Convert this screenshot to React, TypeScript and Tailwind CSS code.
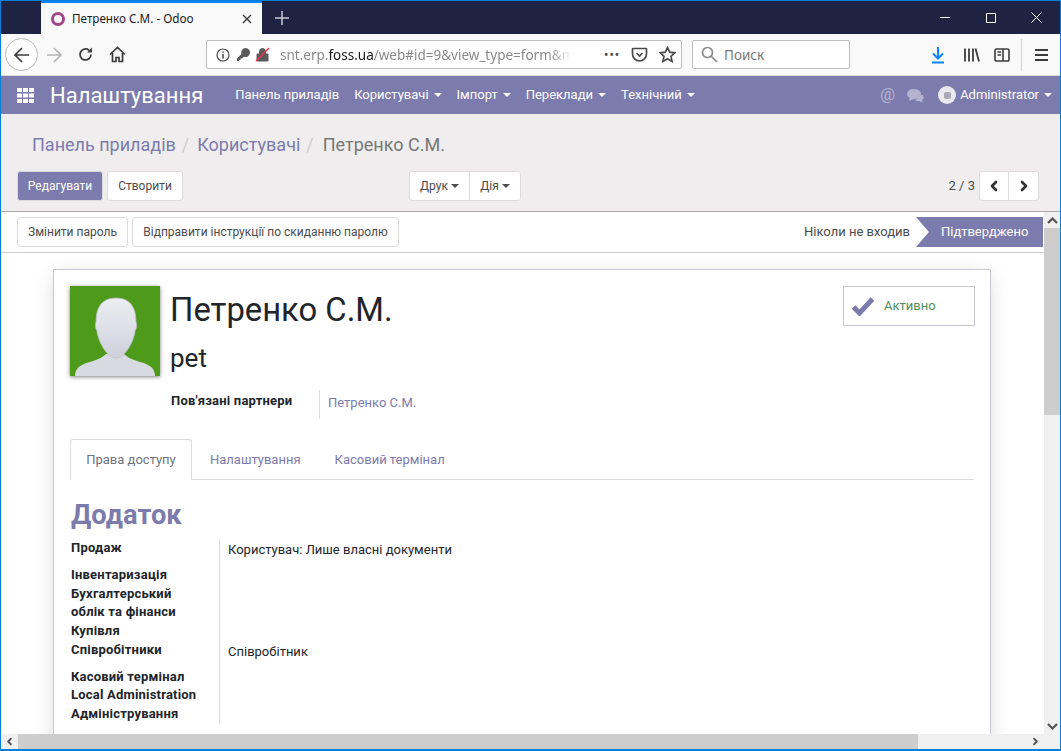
import { ChevronLeft, ChevronRight } from "lucide-react";
import type { ReactNode } from "react";

const navItems = ["Користувачі", "Імпорт", "Переклади", "Технічний"];

const groups = [
  { label: "Продаж", value: "Користувач: Лише власні документи", gap: "mb-[8px]" },
  { label: "Інвентаризація", value: "", gap: "" },
  { label: "Бухгалтерський облік та фінанси", value: "", gap: "" },
  { label: "Купівля", value: "", gap: "" },
  { label: "Співробітники", value: "Співробітник", gap: "mb-[8px]" },
  { label: "Касовий термінал", value: "", gap: "" },
  { label: "Local Administration", value: "", gap: "" },
  { label: "Адміністрування", value: "", gap: "" }
];

function Caret({ className = "ml-[5px] border-t-white" }: { className?: string }): ReactNode {
  return <span className={`inline-block h-0 w-0 border-x-[4px] border-t-[4px] border-x-transparent align-middle ${className}`} />;
}

function Btn({ children, className = "" }: { children: ReactNode; className?: string }): ReactNode {
  return (
    <button type="button" className={`flex h-[30px] items-center justify-center rounded-[3px] border border-[#dcdcdc] bg-white px-[10px] text-[12px] text-[#4c4c4c] ${className}`}>
      {children}
    </button>
  );
}

function BrowserChrome(): ReactNode {
  return (
    <>
      <div className="flex h-[33px] bg-[#1e2344]">
        <div className="w-[40px]" />
        <div className="flex h-[33px] w-[221px] items-center border-t-2 border-[#0a84ff] bg-[#f9f9fa] pl-[9px] pr-[9px]">
          <svg width="16" height="16" viewBox="0 0 16 16">
            <circle cx="8" cy="8" r="5.5" fill="none" stroke="#a24689" strokeWidth="3" />
          </svg>
          <span className="ml-[6px] flex-1 text-[11.7px] text-[#18181a]" style={{ fontFamily: "'Noto Sans', sans-serif" }}>Петренко С.М. - Odoo</span>
          <svg width="12" height="12" viewBox="0 0 12 12" stroke="#3a3a3a" strokeWidth="1.4">
            <path d="M2 2l8 8M10 2l-8 8" />
          </svg>
        </div>
        <div className="flex w-[40px] items-center justify-center">
          <svg width="14" height="14" viewBox="0 0 14 14" stroke="#c8c9d2" strokeWidth="1.5">
            <path d="M7 0v14M0 7h14" />
          </svg>
        </div>
        <div className="flex-1" />
        <div className="flex items-center">
          <svg className="mr-[35px]" width="11" height="11" viewBox="0 0 11 11" stroke="#fff">
            <path d="M1 5.5h10" />
          </svg>
          <svg className="mr-[35px]" width="11" height="11" viewBox="0 0 11 11" stroke="#fff" fill="none">
            <path d="M1.5 1.5h9v9h-9z" />
          </svg>
          <svg className="mr-[18px]" width="11" height="11" viewBox="0 0 11 11" stroke="#fff">
            <path d="M.5.5l10 10M10.5.5l-10 10" />
          </svg>
        </div>
      </div>
      <div className="flex h-[42px] items-center border-b border-[#dcdcdc] bg-[#f9f9fa]">
        <div className="ml-[4px] flex h-[33px] w-[33px] items-center justify-center rounded-full border border-[#b8b8b8] bg-white">
          <svg width="18" height="18" viewBox="0 0 18 18" fill="none" stroke="#3c3c3c" strokeWidth="1.7">
            <path d="M16 9H2M9 2L2 9l7 7" />
          </svg>
        </div>
        <svg className="ml-[7px]" width="18" height="18" viewBox="0 0 18 18" fill="none" stroke="#b4b4b4" strokeWidth="1.7">
          <path d="M2 9h14M9 2l7 7-7 7" />
        </svg>
        <svg className="ml-[14px]" width="17" height="17" viewBox="0 0 17 17" fill="none" stroke="#3c3c3c" strokeWidth="1.8">
          <path d="M14 8.5A5.5 5.5 0 1 1 12 4.2" />
          <path d="M15 1.5v5h-5" fill="#3c3c3c" stroke="none" />
        </svg>
        <svg className="ml-[15px]" width="17" height="17" viewBox="0 0 17 17" fill="none" stroke="#3c3c3c" strokeWidth="1.7">
          <path d="M1 8.5l7.5-7 7.5 7M3.5 7v8.500h3.500v-4h3v4h3.500V7" />
        </svg>
        <div className="ml-[80px] flex h-[29px] w-[476px] items-center rounded-[2px] border border-[#bebebe] bg-white pl-[9px]">
          <svg width="14" height="14" viewBox="0 0 14 14" fill="none" stroke="#4a4a4a" strokeWidth="1.200">
            <circle cx="7" cy="7" r="6" />
            <path d="M7 6v4.500M7 3.500v1.300" strokeWidth="1.600" />
          </svg>
          <svg className="ml-[6px]" width="15" height="15" viewBox="0 0 15 15" fill="#5a5a5a">
            <path d="M9.500 1a4.500 4.500 0 1 1-1.600 8.700L6 11.500H4.500V13H3v1H1v-2.500L5.400 7A4.500 4.500 0 0 1 9.500 1z" />
          </svg>
          <svg className="ml-[4px]" width="15" height="15" viewBox="0 0 15 15">
            <path d="M2 7h11v7H2zM4.500 7V4.500a3 3 0 0 1 6 0V7" fill="#5a5a5a" stroke="#5a5a5a" />
            <path d="M1 14L14 1" stroke="#f0304a" strokeWidth="1.500" />
          </svg>
          <div className="ml-[10px] w-[292px] whitespace-nowrap pt-px text-[13.500px] text-[#8a8a8a] [mask-image:linear-gradient(to_right,black_92%,transparent)]" style={{ fontFamily: "'Noto Sans', sans-serif" }}>
            snt.erp.<span className="text-[#18181a]">foss.ua</span>/web#id=9&amp;view_type=form&amp;m
          </div>
          <div className="flex-1" />
          <span className="mr-[11px] text-[12px] font-bold tracking-[1px] text-[#4a4a4a]">•••</span>
          <svg className="mr-[11px]" width="17" height="17" viewBox="0 0 17 17" fill="none" stroke="#4a4a4a" strokeWidth="1.700">
            <path d="M2 2.500h13a.5.5 0 0 1 .5.5v5a7 7 0 0 1-14 0V3a.5.5 0 0 1 .5-.5zM5.500 7l3 3 3-3" />
          </svg>
          <svg className="mr-[5px]" width="17" height="17" viewBox="0 0 17 17" fill="none" stroke="#4a4a4a" strokeWidth="1.700">
            <path d="M8.500 1.500l2.200 4.700 5 .6-3.700 3.500 1 5.100-4.500-2.600-4.500 2.600 1-5.100L1.300 6.800l5-.6z" />
          </svg>
        </div>
        <div className="ml-[10px] flex h-[29px] w-[158px] items-center rounded-[2px] border border-[#bebebe] bg-white pl-[8px]">
          <svg width="17" height="17" viewBox="0 0 17 17" fill="none" stroke="#8a8a8a" strokeWidth="1.700">
            <circle cx="6.500" cy="6.500" r="5" />
            <path d="M10.500 10.500l5.500 5.500" />
          </svg>
          <span className="ml-[6px] pt-px text-[13.500px] text-[#777]" style={{ fontFamily: "'Noto Sans', sans-serif" }}>Поиск</span>
        </div>
        <div className="flex-1" />
        <svg width="16" height="18" viewBox="0 0 16 18" fill="none" stroke="#0a84ff" strokeWidth="2">
          <path d="M8 1v11M3 7.500l5 5 5-5M2 16.500h12" />
        </svg>
        <svg className="ml-[17px]" width="17" height="16" viewBox="0 0 17 16" fill="none" stroke="#3c3c3c" strokeWidth="1.800">
          <path d="M2 1.500v13M6 1.500v13M10 1.500v13M12.500 1.500l3.500 13" />
        </svg>
        <svg className="ml-[14px]" width="16" height="16" viewBox="0 0 16 16" fill="none" stroke="#3c3c3c" strokeWidth="1.600">
          <path d="M2.500 2h11A1.500 1.500 0 0 1 15 3.500v9a1.500 1.500 0 0 1-1.500 1.500h-11A1.500 1.500 0 0 1 1 12.500v-9A1.500 1.500 0 0 1 2.500 2z" />
          <path d="M9 2v12M3.500 5H7M3.500 8H7" />
        </svg>
        <div className="ml-[11px] h-[32px] w-px bg-[#d4d4d4]" />
        <svg className="ml-[13px] mr-[12px]" width="13" height="12" viewBox="0 0 13 12" stroke="#3c3c3c" strokeWidth="1.800">
          <path d="M0 1h13M0 6h13M0 11h13" />
        </svg>
      </div>
    </>
  );
}

function Navbar(): ReactNode {
  return (
    <nav className="flex h-[38px] items-center bg-[#7c7bad] text-[13px] text-white">
      <svg className="ml-[16px]" width="17" height="15" viewBox="0 0 17 15" fill="#fff">
        <path d="M0 0h5v4H0zM6 0h5v4H6zM12 0h5v4h-5zM0 5.500h5v4H0zM6 5.500h5v4H6zM12 5.500h5v4h-5zM0 11h5v4H0zM6 11h5v4H6zM12 11h5v4h-5z" />
      </svg>
      <span className="ml-[16px] text-[22px]">Налаштування</span>
      <span className="ml-[32px]">Панель приладів</span>
      {navItems.map((item) => (
        <span key={item} className="ml-[15px] flex items-center">
          {item}
          <Caret />
        </span>
      ))}
      <div className="flex-1" />
      <span className="text-[17px] text-[#b4b3d0]">@</span>
      <svg className="ml-[12px]" width="18" height="15" viewBox="0 0 18 15" fill="#b4b3d0">
        <ellipse cx="7" cy="6" rx="7" ry="5" />
        <path d="M3 9l-1 4 5-2zM15 6.500a5 4 0 0 1 0 6l1 2-4-1.500a5 5 0 0 1-4-1z" />
      </svg>
      <div className="ml-[13px] flex h-[18px] w-[18px] items-center justify-center rounded-full bg-[#e8e8ee]">
        <span className="h-[7px] w-[7px] rounded-[2px] bg-[#a9a9b8]" />
      </div>
      <span className="ml-[4px]">Administrator</span>
      <span className="mr-[8px] flex">
        <Caret />
      </span>
    </nav>
  );
}

function ControlPanel(): ReactNode {
  return (
    <div className="h-[98px] border-b border-[#a9a9a9] bg-[#efeded] pl-[16px] pr-[21px]">
      <div className="flex h-[57px] items-center pl-[15px] pt-[3px] text-[18px]">
        <span className="text-[#7c7bad]">Панель приладів</span>
        <span className="px-[6px] text-[#cccccc]">/</span>
        <span className="ml-[2px] text-[#7c7bad]">Користувачі</span>
        <span className="px-[6px] text-[#cccccc]">/</span>
        <span className="ml-[3px] text-[#777777]">Петренко С.М.</span>
      </div>
      <div className="flex items-center">
        <Btn className="w-[86px] border-[#7c7bad] !bg-[#7c7bad] !text-white">Редагувати</Btn>
        <Btn className="ml-[4px] w-[76px]">Створити</Btn>
        <div className="ml-[226px] flex">
          <Btn className="w-[61px] rounded-r-none">
            Друк
            <Caret className="ml-[3px] border-t-[#4c4c4c]" />
          </Btn>
          <Btn className="-ml-px w-[52px] rounded-l-none">
            Дія
            <Caret className="ml-[3px] border-t-[#4c4c4c]" />
          </Btn>
        </div>
        <div className="flex-1" />
        <span className="mr-[4px] text-[13px] text-[#4c4c4c]">2 / 3</span>
        <Btn className="w-[30px] rounded-r-none !px-0">
          <ChevronLeft size={16} strokeWidth={4} color="#333" />
        </Btn>
        <Btn className="-ml-px w-[31px] rounded-l-none !px-0">
          <ChevronRight size={16} strokeWidth={4} color="#333" />
        </Btn>
      </div>
    </div>
  );
}

function Avatar(): ReactNode {
  return (
    <svg className="shrink-0 shadow-[0_1px_4px_rgba(0,0,0,0.5)]" width="90" height="90" viewBox="0 0 90 90">
      <defs>
        <linearGradient id="head" x1="0" y1="0" x2="0" y2="1">
          <stop offset="0" stopColor="#eceef2" />
          <stop offset="1" stopColor="#ced1dc" />
        </linearGradient>
      </defs>
      <rect width="90" height="90" fill="#4e9a1b" />
      <path d="M5 90c0-9 7-12 18-15 6-2 10-4 13-7h18c3 3 7 5 13 7 11 3 18 6 18 15z" fill="#d8dae1" />
      <path d="M46 12c13 0 20 8 20 24 1 2 1 6-1 9-1 10-10 27-19 27S28 55 27 45c-2-3-2-7-1-9 0-16 7-24 20-24z" fill="url(#head)" stroke="#bcbfcb" strokeWidth="0.8" />
    </svg>
  );
}

function Sheet(): ReactNode {
  return (
    <div className="ml-[52px] mt-[16px] h-[520px] w-[938px] shrink-0 border border-[#c8c8d4] bg-white px-[16px] pt-[16px] shadow-[0_5px_20px_-3px_rgba(0,0,0,0.18)]">
      <div className="flex">
        <Avatar />
        <div className="ml-[11px] flex-1 text-[#212529]">
          <div className="mt-[5px] -ml-px text-[32.8px] leading-[38px]">Петренко С.М.</div>
          <div className="mt-[14px] -ml-px text-[26px] leading-[30px]">pet</div>
          <div className="mt-[17px] flex h-[29px]">
            <div className="w-[148px] text-[13px] font-bold leading-[21px] tracking-[0.2px]">Пов'язані партнери</div>
            <div className="border-l border-[#dcdcdc] pl-[8px] pt-[4px] text-[13px] leading-[17px] text-[#7c7bad]">Петренко С.М.</div>
          </div>
        </div>
        <div className="-mr-px flex h-[40px] w-[132px] items-center border border-[#c8c8d4] pl-[7px]">
          <svg width="24" height="20" viewBox="0 0 24 20" fill="none" stroke="#7c7bad" strokeWidth="5">
            <path d="M2.500 11l6 6L21.500 3" />
          </svg>
          <span className="ml-[9px] text-[13px] text-[#4f8f5e]">Активно</span>
        </div>
      </div>
      <div className="mt-[20px] flex h-[41px] border-b border-[#dcdcdc] text-[13px]">
        <div className="flex h-[41px] w-[122px] items-center justify-center rounded-t-[3px] border border-b-white border-[#dcdcdc] bg-white text-[#6c757d]">Права доступу</div>
        <div className="flex h-[41px] items-center px-[18px] text-[#7c7bad]">Налаштування</div>
        <div className="flex h-[41px] items-center px-[16px] text-[#7c7bad]">Касовий термінал</div>
      </div>
      <div className="mt-[17px] pl-px text-[27.3px] font-bold leading-[36px] text-[#7c7bad]">Додаток</div>
      <div className="mt-[6px] w-[400px]">
        <div className="relative pl-px">
          <div className="absolute bottom-0 left-[149px] top-0 w-px bg-[#dcdcdc]" />
          {groups.map((group) => (
            <div key={group.label} className={`flex ${group.gap}`}>
              <div className="w-[130px] text-[13px] font-bold leading-[18.75px] tracking-[0.2px] text-[#212529]">{group.label}</div>
              <div className="ml-[27px] pt-[3px] text-[13px] leading-[15.75px] text-[#212529]">{group.value}</div>
            </div>
          ))}
        </div>
      </div>
    </div>
  );
}

export default function App(): ReactNode {
  return (
    <div className="flex h-[751px] w-[1061px] flex-col overflow-hidden border-x border-b-2 border-t border-[#0a7fd8] bg-white" style={{ fontFamily: "Roboto, sans-serif" }}>
      <BrowserChrome />
      <Navbar />
      <ControlPanel />
      <div className="flex min-h-0 flex-1">
        <div className="flex min-w-0 flex-1 flex-col">
          <div className="flex h-[41px] shrink-0 items-center justify-end border-b border-[#cfcfcf] pl-[16px] pr-px">
            <Btn className="w-[111px]">Змінити пароль</Btn>
            <Btn className="ml-[4px] w-[267px]">Відправити інструкції по скиданню паролю</Btn>
            <div className="flex-1" />
            <span className="mr-[6px] text-[13px] text-[#4c4c4c]">Ніколи не входив</span>
            <div className="flex h-[30px] w-[127px] items-center bg-[#7c7bad] pl-[25px] text-[13px] text-white [clip-path:polygon(0_0,100%_0,100%_100%,0_100%,13px_50%)]">Підтверджено</div>
          </div>
          <div className="flex min-h-0 flex-1 overflow-hidden">
            <Sheet />
          </div>
          <div className="flex h-[15px] shrink-0 bg-[#f0f0f0]">
            <div className="flex w-[17px] items-center justify-center">
              <ChevronLeft size={11} strokeWidth={4} color="#555" />
            </div>
            <div className="w-[900px] bg-[#cdcdcd]" />
            <div className="flex-1" />
            <div className="flex w-[17px] items-center justify-center">
              <ChevronRight size={11} strokeWidth={4} color="#555" />
            </div>
          </div>
        </div>
        <div className="flex w-[16px] shrink-0 flex-col bg-[#f0f0f0]">
          <div className="flex h-[16px] items-center justify-center">
            <svg width="11" height="7" viewBox="0 0 11 7" fill="none" stroke="#555" strokeWidth="2.200">
              <path d="M1 6l4.500-4.500L10 6" />
            </svg>
          </div>
          <div className="h-[187px] bg-[#cdcdcd]" />
          <div className="flex-1" />
          <div className="mb-[15px] flex h-[16px] items-center justify-center">
            <svg width="11" height="7" viewBox="0 0 11 7" fill="none" stroke="#555" strokeWidth="2.200">
              <path d="M1 1l4.500 4.500L10 1" />
            </svg>
          </div>
        </div>
      </div>
    </div>
  );
}
